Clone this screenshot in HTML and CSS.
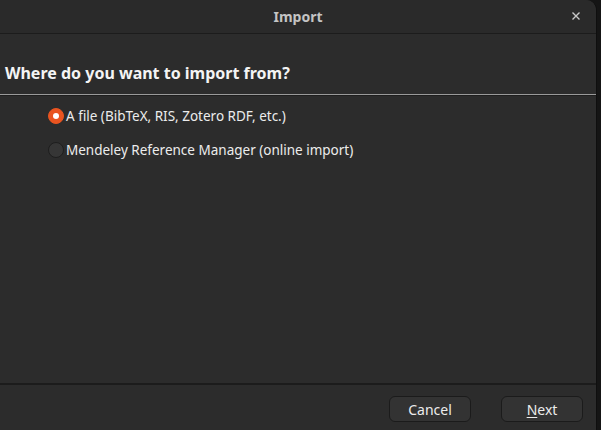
FILE: index.html
```html
<!DOCTYPE html>
<html>
<head>
<meta charset="utf-8">
<link rel="stylesheet" href="styles.css">
</head>
<body>
<div class="window">
  <div class="titlebar">
    <span class="title">Import</span>
    <span class="close">
      <svg width="10" height="10" viewBox="0 0 10 10"><path d="M1.5 1.5 L8.5 8.5 M8.5 1.5 L1.5 8.5" stroke="#c8c8c8" stroke-width="1.4"/></svg>
    </span>
  </div>
  <div class="content">
    <div class="heading">Where do you want to import from?</div>
    <div class="options">
      <label class="option"><span class="radio checked"></span>A file (BibTeX, RIS, Zotero RDF, etc.)</label>
      <label class="option"><span class="radio"></span>Mendeley Reference Manager (online import)</label>
    </div>
  </div>
  <div class="footer">
    <button class="btn">Cancel</button>
    <button class="btn"><u>N</u>ext</button>
  </div>
</div>
</body>
</html>
```
FILE: styles.css
```css
html, body {
  margin: 0;
  padding: 0;
  background: #151515;
  width: 601px;
  height: 430px;
  overflow: hidden;
}
.window {
  width: 596px;
  height: 430px;
  background: #2c2c2c;
  border-right: 1px solid #0f0f0f;
  border-top-right-radius: 10px;
  display: flex;
  flex-direction: column;
  font-family: "Noto Sans", "DejaVu Sans", sans-serif;
  color: #f0f0f0;
}
.titlebar {
  height: 33px;
  flex: none;
  border-bottom: 1px solid #1c1c1c;
  background: #2a2a2a;
  border-top-right-radius: 10px;
  display: flex;
  align-items: center;
  justify-content: center;
  position: relative;
}
.title {
  font-weight: bold;
  font-size: 14px;
  color: #c4c4c4;
}
.close {
  position: absolute;
  right: 15px;
  top: 11px;
  width: 10px;
  height: 10px;
  display: flex;
}
.content {
  flex: 1;
  display: flex;
  flex-direction: column;
}
.heading {
  font-weight: bold;
  font-size: 16px;
  padding: 28px 0 0 5px;
  height: 32px;
  border-bottom: 1px solid #9a9a9a;
  box-shadow: 0 1px 0 #1e1e1e;
  color: #f4f4f4;
}
.options {
  padding: 11px 0 0 48px;
  display: flex;
  flex-direction: column;
  gap: 14px;
}
.option {
  display: flex;
  align-items: center;
  font-size: 13.5px;
  height: 20px;
  color: #ececec;
}
.radio {
  width: 14px;
  height: 14px;
  border-radius: 50%;
  background: #363636;
  border: 1px solid #1e1e1e;
  margin-right: 2px;
  flex: none;
  position: relative;
}
.radio.checked {
  background: #e95420;
  border-color: #e95420;
}
.radio.checked::after {
  content: "";
  position: absolute;
  left: 4px;
  top: 4px;
  width: 6px;
  height: 6px;
  border-radius: 50%;
  background: #ffffff;
}
.footer {
  flex: none;
  border-top: 2px solid #1c1c1c;
  display: flex;
  justify-content: flex-end;
  align-items: flex-start;
  padding: 11px 13px 0 0;
  gap: 30px;
  box-sizing: border-box;
  height: 47px;
}
.btn {
  width: 82px;
  height: 26px;
  background: #333333;
  border: 1px solid #1b1b1b;
  border-radius: 6px;
  color: #ececec;
  font-family: "Noto Sans", "DejaVu Sans", sans-serif;
  font-size: 14px;
  padding: 0;
}
.btn u {
  text-decoration-thickness: 1px;
  text-underline-offset: 2px;
}
```
